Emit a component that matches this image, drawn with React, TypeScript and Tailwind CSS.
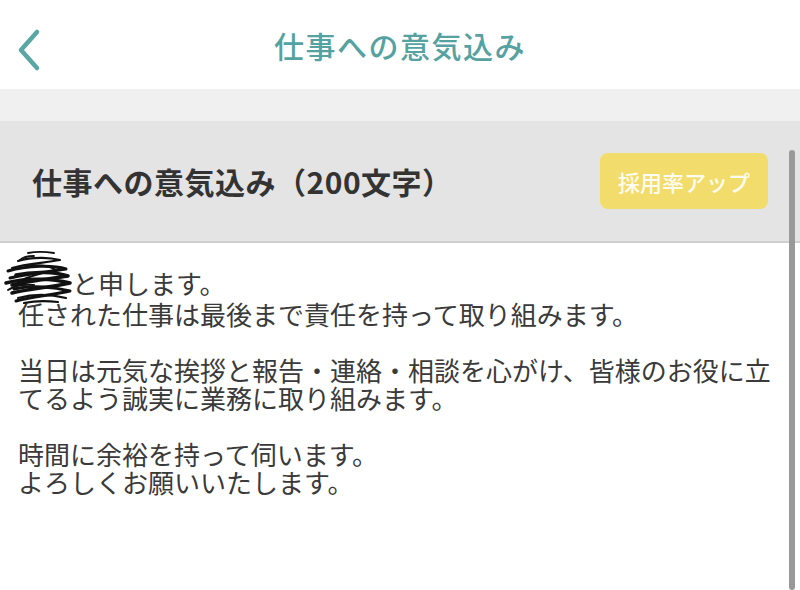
import React from 'react';

const font = { fontFamily: '"Noto Sans CJK JP", "Noto Sans", sans-serif' };

const Scribble = () => (
  <svg
    className="absolute left-[-14px] top-[-24px] pointer-events-none"
    width="74"
    height="56"
    viewBox="0 0 74 56"
    fill="none"
    stroke="#111"
    strokeLinecap="round"
    strokeLinejoin="round"
  >
    <path d="M24 3 C34 1 44 2 50 3 M30 6 C22 6 18 8 16 10" strokeWidth="1.8" />
    <path d="M14 11 C30 6 48 8 56 10 C40 13 22 14 8 18" strokeWidth="2.2" />
    <path d="M4 21 C24 15 50 15 62 19 C44 22 20 24 6 28" strokeWidth="3" />
    <path d="M12 25 C30 21 52 22 64 26 C46 29 22 31 8 35" strokeWidth="3.5" />
    <path d="M2 33 C24 27 50 29 66 33 C48 37 24 39 8 43" strokeWidth="3.5" />
    <path d="M10 39 C28 35 50 37 66 41 C48 45 26 47 12 51" strokeWidth="3" />
    <path d="M14 48 C32 43 50 45 62 48 M20 53 C34 50 46 51 54 52" strokeWidth="2.2" />
    <path d="M22 16 C34 14 46 16 52 20 C38 23 26 26 18 30" strokeWidth="2" />
    <path d="M4 40 C10 36 20 34 30 35" strokeWidth="2" />
  </svg>
);

export default function App() {
  return (
    <div className="relative w-[800px] h-[590px] overflow-hidden bg-white" style={font}>
      {/* top bar */}
      <header className="relative h-[89px] flex items-center justify-center bg-white">
        <button className="absolute left-[15px] top-[28px] w-[28px] h-[44px] flex items-center justify-center">
          <svg width="28" height="44" viewBox="0 0 28 44" fill="none">
            <path d="M22 4 L6 22 L22 40" stroke="#5aa6a5" strokeWidth="4.5" strokeLinecap="round" strokeLinejoin="round" />
          </svg>
        </button>
        <h1 className="text-[30px] font-medium text-[#55a2a1] tracking-[1.5px] leading-none">仕事への意気込み</h1>
      </header>

      <div className="h-[32px] bg-[#f0f0f0]" />

      {/* section header */}
      <div className="h-[122px] bg-[#e4e4e4] border-b-2 border-[#cfcfcf] flex items-center justify-between pl-[32px] pr-[32px]">
        <h2 className="text-[30px] font-bold text-[#333] leading-none tracking-[0.5px]">仕事への意気込み（200文字）</h2>
        <div className="w-[168px] h-[56px] rounded-[8px] bg-[#f2dc6c] flex items-center justify-center">
          <span className="text-[22px] font-medium text-white/90 leading-none">採用率アップ</span>
        </div>
      </div>

      {/* body */}
      <div className="pl-[18px] pr-[20px] pt-[26px] text-[26px] leading-[28px] text-[#3a3a3a]">
        <p>
          <span className="relative inline-block w-[54px] h-[26px] align-middle">
            <Scribble />
          </span>
          と申します。
        </p>
        <p>任された仕事は最後まで責任を持って取り組みます。</p>
        <p>&nbsp;</p>
        <p>当日は元気な挨拶と報告・連絡・相談を心がけ、皆様のお役に立てるよう誠実に業務に取り組みます。</p>
        <p>&nbsp;</p>
        <p>時間に余裕を持って伺います。</p>
        <p>よろしくお願いいたします。</p>
      </div>

      {/* scrollbar */}
      <div className="absolute right-[5px] top-[150px] bottom-0 w-[6px] rounded-full bg-[#999]" />
    </div>
  );
}
